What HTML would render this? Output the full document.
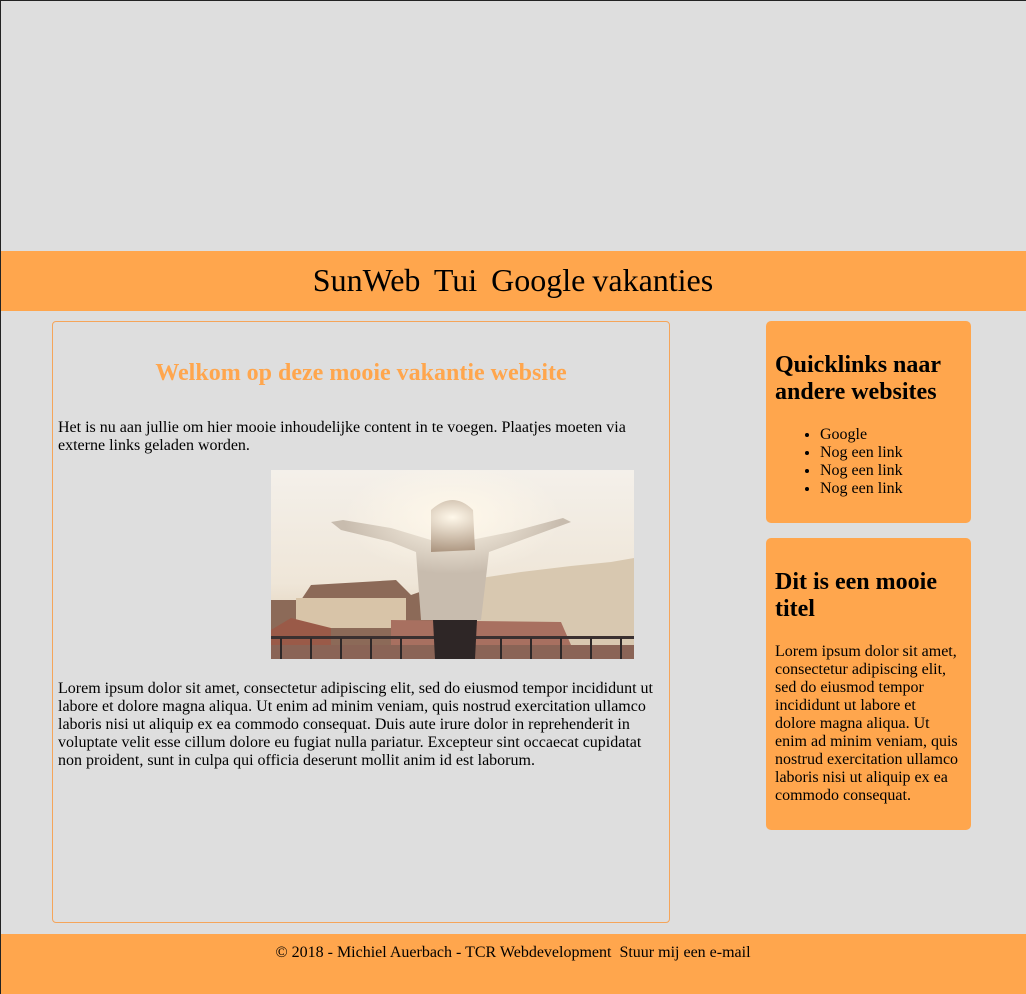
<!DOCTYPE html>
<html><head><meta charset="utf-8"><style>
*{margin:0;padding:0;box-sizing:border-box}
body{width:1026px;height:994px;background:#dedede;font-family:"Liberation Serif",serif;color:#000;position:relative;overflow:hidden}
.a{position:absolute}
.or{background:#ffa64d}
#hdr{left:0;top:251px;width:1026px;height:60px;text-align:center;font-size:32px;line-height:58px;word-spacing:-1px}
#main{left:52px;top:321px;width:618px;height:602px;border:1px solid #f5a55a;border-radius:4px}
h2{position:absolute;left:0;width:616px;top:36px;text-align:center;color:#ffa64d;font-size:24px;line-height:30px}
p{font-size:16px;line-height:18px}
.box{left:766px;width:205px;border-radius:5px;padding:0 12px 0 9px}
h3{font-size:24px;line-height:27px;font-weight:bold}
ul{list-style:disc;padding-left:45px;font-size:16px;line-height:18px}
#ftr{left:0;top:934px;width:1026px;height:60px;text-align:center;font-size:16px;line-height:38px}
</style></head><body>
<div class="a" style="left:0;top:0;width:1026px;height:1px;background:#222"></div>
<div class="a" style="left:0;top:0;width:1px;height:994px;background:#222;z-index:5"></div>
<div class="a or" id="hdr">SunWeb&nbsp; Tui&nbsp; Google vakanties</div>
<div class="a" id="main">
<h2>Welkom op deze mooie vakantie website</h2>
<p class="a" style="left:5px;top:97px;width:600px">Het is nu aan jullie om hier mooie inhoudelijke content in te voegen. Plaatjes moeten via externe links geladen worden.</p>
<svg class="a" style="left:218px;top:148px" width="363" height="189" viewBox="0 0 363 189">
<defs><linearGradient id="s" x1="0" y1="0" x2="0" y2="1"><stop offset="0" stop-color="#f4f0ea"/><stop offset="0.6" stop-color="#efe6d8"/><stop offset="1" stop-color="#d9c4a8"/></linearGradient>
<radialGradient id="g" cx="0.5" cy="0.25" r="0.3"><stop offset="0" stop-color="#fff8ea"/><stop offset="1" stop-color="#fff8ea" stop-opacity="0"/></radialGradient></defs>
<rect width="363" height="189" fill="url(#s)"/>
<path d="M210 108 L250 102 L300 96 L340 92 L363 88 L363 189 L200 189Z" fill="#d8c8b0"/>
<path d="M0 130 L30 130 L40 115 L125 110 L140 125 L160 118 L170 189 L0 189Z" fill="#8c6a58"/>
<rect x="25" y="128" width="110" height="30" fill="#d8c4a8"/>
<path d="M0 160 L20 148 L60 158 L60 189 L0 189Z" fill="#9a5a48"/>
<path d="M120 150 L290 152 L300 175 L120 175Z" fill="#a87060"/>
<rect x="0" y="175" width="363" height="14" fill="#8a6456"/>
<rect x="0" y="166" width="363" height="3" fill="#3a3030"/>
<g stroke="#2e2828" stroke-width="2">
<line x1="10" y1="168" x2="10" y2="189"/><line x1="40" y1="168" x2="40" y2="189"/><line x1="70" y1="168" x2="70" y2="189"/><line x1="100" y1="168" x2="100" y2="189"/><line x1="130" y1="168" x2="130" y2="189"/><line x1="230" y1="168" x2="230" y2="189"/><line x1="260" y1="168" x2="260" y2="189"/><line x1="290" y1="168" x2="290" y2="189"/><line x1="320" y1="168" x2="320" y2="189"/><line x1="350" y1="168" x2="350" y2="189"/></g>
<path d="M60 52 L72 50 L120 58 L160 70 L200 70 L240 62 L292 48 L300 52 L240 74 L218 82 L210 150 L150 150 L145 82 L120 72 L70 60Z" fill="#c8bcae"/>
<path d="M162 150 L206 150 L204 189 L164 189Z" fill="#2e2626"/>
<path d="M160 40 Q182 20 202 40 L204 80 L160 82Z" fill="#7a5a40"/>
<rect width="363" height="189" fill="url(#g)"/>
</svg>
<p class="a" style="left:5px;top:358px;width:600px">Lorem ipsum dolor sit amet, consectetur adipiscing elit, sed do eiusmod tempor incididunt ut labore et dolore magna aliqua. Ut enim ad minim veniam, quis nostrud exercitation ullamco laboris nisi ut aliquip ex ea commodo consequat. Duis aute irure dolor in reprehenderit in voluptate velit esse cillum dolore eu fugiat nulla pariatur. Excepteur sint occaecat cupidatat non proident, sunt in culpa qui officia deserunt mollit anim id est laborum.</p>
</div>
<div class="a or box" style="top:321px;height:202px">
<h3 style="margin-top:31px">Quicklinks naar andere websites</h3>
<ul style="margin-top:20px"><li>Google</li><li>Nog een link</li><li>Nog een link</li><li>Nog een link</li></ul>
</div>
<div class="a or box" style="top:538px;height:292px">
<h3 style="margin-top:31px">Dit is een mooie titel</h3>
<p style="margin-top:20px">Lorem ipsum dolor sit amet, consectetur adipiscing elit, sed do eiusmod tempor incididunt ut labore et dolore magna aliqua. Ut enim ad minim veniam, quis nostrud exercitation ullamco laboris nisi ut aliquip ex ea commodo consequat.</p>
</div>
<div class="a or" id="ftr">© 2018 - Michiel Auerbach - TCR Webdevelopment&nbsp; Stuur mij een e-mail</div>
</body></html>
